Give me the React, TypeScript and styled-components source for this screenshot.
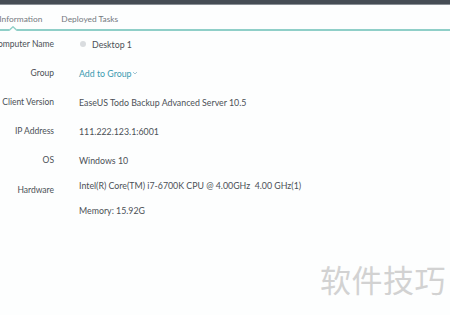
import React from "react";
import styled, { createGlobalStyle } from "styled-components";

const Global = createGlobalStyle`
  html, body { margin: 0; padding: 0; background: #fff; }
  body { font-family: "Lato", "Open Sans", sans-serif; overflow: hidden; }
`;

const Page = styled.div`
  width: 450px;
  height: 315px;
  position: relative;
  background: #fdfefe;
  overflow: hidden;
`;

const TopBar = styled.div`
  height: 4px;
  background: #464d55;
  border-bottom: 1px solid #8a9096;
`;

const Tabs = styled.div`
  display: flex;
  align-items: center;
  height: 21px;
  padding-top: 3px;
  border-bottom: 2px solid #8fcfc8;
  position: relative;
`;

const TabStrip = styled.div`
  display: flex;
  gap: 19px;
  margin-left: -22px;
`;

const Tab = styled.div`
  font-size: 8.4px;
  color: #74797e;
  white-space: nowrap;
`;

const Notch = styled.div`
  position: absolute;
  left: 9px;
  bottom: -2px;
  width: 8px;
  height: 5px;
  background: #fdfefe;
  svg { display: block; }
`;

const Rows = styled.div`
  display: grid;
  grid-template-columns: 54px 1fr;
  column-gap: 25px;
  margin-top: -1.5px;
`;

const Label = styled.div<{ $h: number }>`
  font-size: 8.5px;
  color: #4b5056;
  height: ${(p) => p.$h}px;
  display: flex;
  align-items: center;
  justify-content: flex-end;
  white-space: nowrap;
`;

const Value = styled.div<{ $h: number }>`
  font-size: 8.8px;
  color: #4b5056;
  height: ${(p) => p.$h}px;
  display: flex;
  align-items: center;
  white-space: nowrap;
  gap: 6px;
`;

const Hw = styled.div`
  display: flex;
  flex-direction: column;
  font-size: 8.8px;
  color: #4b5056;
  padding-top: 5.5px;
  gap: 13px;
  line-height: 12px;
`;

const Link = styled.span`
  color: #3a9ab0;
  display: inline-flex;
  align-items: center;
`;

const Dot = styled.span`
  display: inline-block;
  width: 6px;
  height: 6px;
  border-radius: 50%;
  background: #d9dcdf;
  margin-left: 1px;
`;

const Watermark = styled.div`
  position: absolute;
  left: 320px;
  top: 256px;
  font-family: "Noto Sans CJK SC", sans-serif;
  font-size: 31px;
  color: #d2d2d2;
  letter-spacing: 0.5px;
`;

export default function App() {
  return (
    <Page>
      <Global />
      <TopBar />
      <Tabs>
        <TabStrip>
          <Tab>Basic Information</Tab>
          <Tab>Deployed Tasks</Tab>
        </TabStrip>
        <Notch>
          <svg width="8" height="5" viewBox="0 0 8 5">
            <path d="M0 4.5 L4 0.8 L8 4.5" fill="none" stroke="#8fcfc8" strokeWidth="1.4" />
          </svg>
        </Notch>
      </Tabs>
      <Rows>
        <Label $h={29}>Computer Name</Label>
        <Value $h={29}><Dot />Desktop 1</Value>
        <Label $h={29}>Group</Label>
        <Value $h={29}>
          <Link>
            Add to Group
            <svg width="6" height="4" viewBox="0 0 6 4"><path d="M1 1 L3 3 L5 1" fill="none" stroke="#8ab8c8" strokeWidth="0.8" /></svg>
          </Link>
        </Value>
        <Label $h={29}>Client Version</Label>
        <Value $h={29}>EaseUS Todo Backup Advanced Server 10.5</Value>
        <Label $h={29}>IP Address</Label>
        <Value $h={29}>111.222.123.1:6001</Value>
        <Label $h={29}>OS</Label>
        <Value $h={29}>Windows 10</Value>
        <Label $h={31}>Hardware</Label>
        <Hw>
          <span>Intel(R) Core(TM) i7-6700K CPU @ 4.00GHz&nbsp; 4.00 GHz(1)</span>
          <span>Memory: 15.92G</span>
        </Hw>
      </Rows>
      <Watermark>软件技巧</Watermark>
    </Page>
  );
}
